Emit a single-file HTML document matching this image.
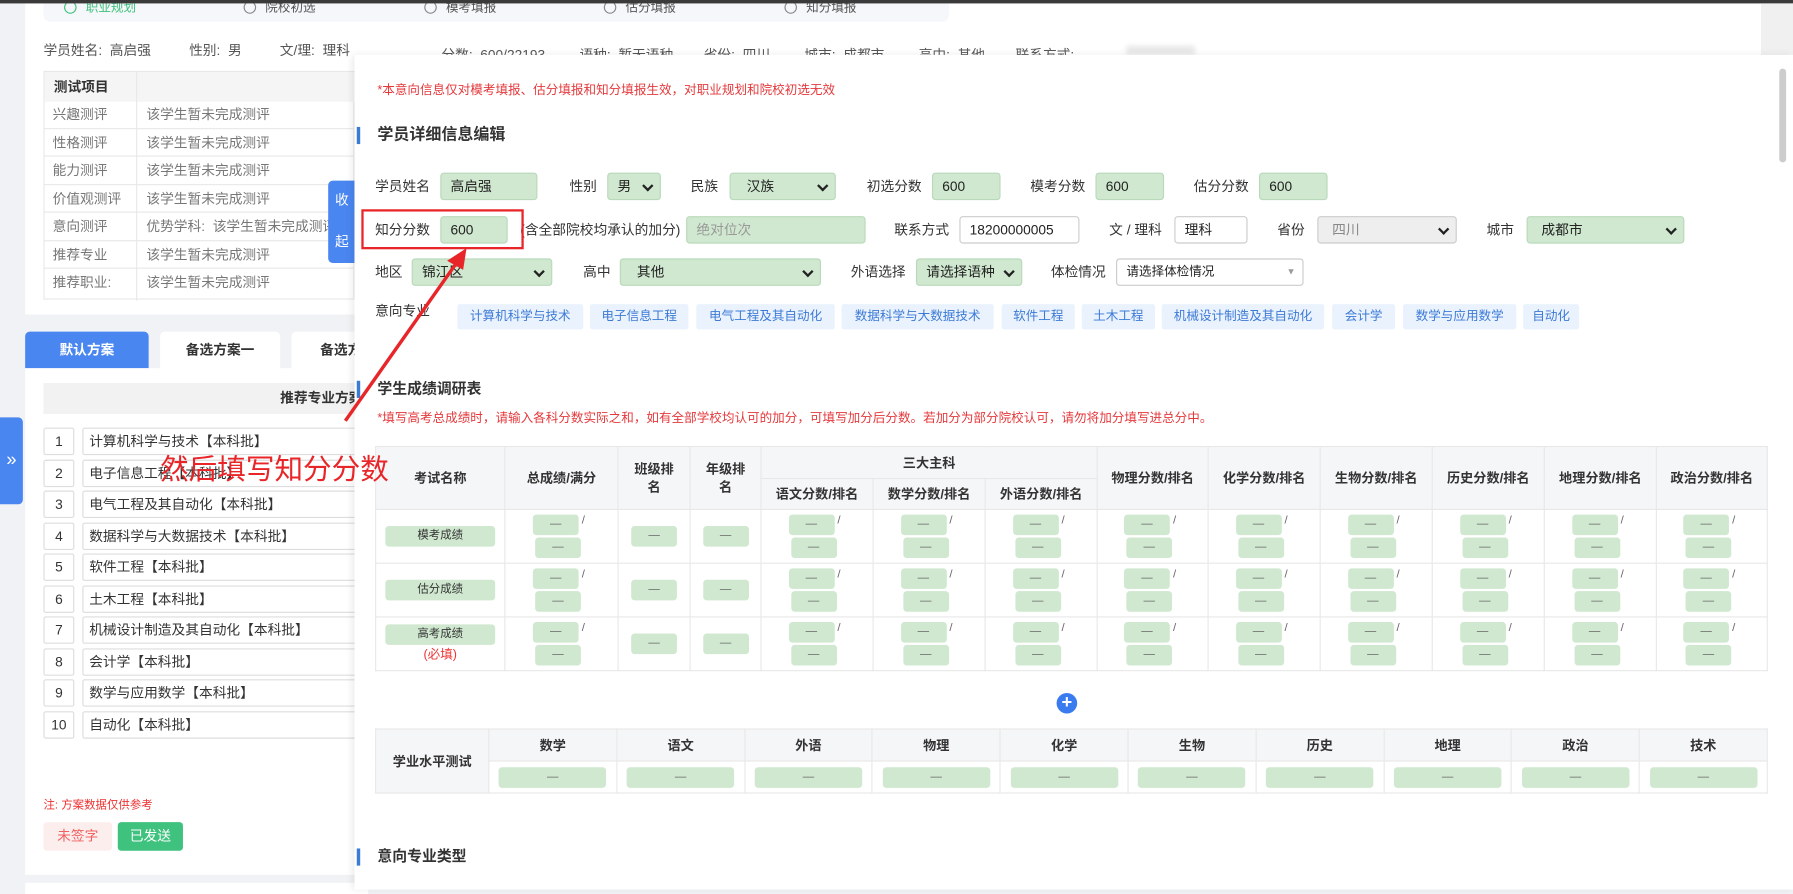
<!DOCTYPE html>
<html><head><meta charset="utf-8">
<style>
*{box-sizing:border-box;margin:0;padding:0}
html,body{width:1793px;height:890px;overflow:hidden;background:#f0f2f5;font-family:"Liberation Sans","Noto Sans CJK SC",sans-serif;color:#333}
#w{position:absolute;left:0;top:0;width:1568px;height:778px;transform:scale(1.14349);transform-origin:0 0;font-size:12px}
.a{position:absolute}
.lbl{position:absolute;font-size:12px;color:#333;line-height:14px}
.in{position:absolute;height:24px;border:1px solid #b9d9bb;background:#cfe8cf;border-radius:3px;font-size:12px;line-height:22px;padding-left:8px;color:#222}
.wh{background:#fff;border-color:#ccc}
.gr{background:#eee;border-color:#ccc;color:#888}
.sel:after{content:"";position:absolute;right:7px;top:7px;width:5px;height:5px;border-right:2px solid #222;border-bottom:2px solid #222;transform:rotate(45deg)}
.tag{position:absolute;top:266px;height:22px;background:#e9f2fd;color:#3d7ad6;font-size:11px;line-height:22px;text-align:center;border-radius:2px}
table{border-collapse:collapse;table-layout:fixed}
td,th{border:1px solid #e8e8e8;text-align:center;font-size:11.5px;color:#333;font-weight:bold}
th{background:#f5f6f8}
.g{display:inline-block;width:40px;height:18px;background:#cfe8cf;border-radius:3px;color:#666;font-size:10px;line-height:18px;text-align:center;font-weight:normal}
.pair{display:inline-block;width:50px;text-align:left;line-height:0}
.pair .g{margin:1px 0}
.sl{color:#666;font-weight:normal;font-size:10px;vertical-align:top;line-height:14px}
.lt td{font-weight:bold}
.row{position:absolute;left:38px;height:22px;width:290px}
.num{position:absolute;left:0;width:27px;height:24px;border:1px solid #ddd;border-radius:2px;text-align:center;line-height:22px;font-size:12px;background:#fff}
.txt{position:absolute;left:34px;width:260px;height:24px;border:1px solid #ddd;border-radius:2px;line-height:22px;padding-left:5px;font-size:12px;background:#fff}
.st{position:absolute;top:-5px;font-size:11px;color:#555;white-space:nowrap}
.st i{display:inline-block;width:11px;height:11px;border:1px solid #888;border-radius:50%;margin-right:8px;vertical-align:-2px}
</style></head><body><div id="w">
<div class="a" style="left:22px;top:3px;width:1520px;height:272px;background:#fff"></div>
<div class="a" style="left:38px;top:3px;width:792px;height:16px;background:#f5f7fa;border-radius:0 0 6px 6px;overflow:hidden">
<div class="st" style="left:18px;color:#3ec27d"><i style="border-color:#3ec27d"></i>职业规划</div>
<div class="st" style="left:175px"><i></i>院校初选</div>
<div class="st" style="left:333px"><i></i>模考填报</div>
<div class="st" style="left:490px"><i></i>估分填报</div>
<div class="st" style="left:648px"><i></i>知分填报</div>
</div>
<div class="a" style="left:0;top:0;width:1568px;height:3px;background:#3a3a3a"></div>
<div class="lbl" style="left:38px;top:37px;color:#555;white-space:nowrap">学员姓名:&nbsp;&nbsp;高启强&nbsp;&nbsp;&nbsp;&nbsp;&nbsp;&nbsp;&nbsp;&nbsp;&nbsp;&nbsp;性别:&nbsp;&nbsp;男&nbsp;&nbsp;&nbsp;&nbsp;&nbsp;&nbsp;&nbsp;&nbsp;&nbsp;&nbsp;文/理:&nbsp;&nbsp;理科</div>
<div class="lbl" style="left:386px;top:41px;color:#555;white-space:nowrap">分数:&nbsp;&nbsp;600/22193&nbsp;&nbsp;&nbsp;&nbsp;&nbsp;&nbsp;&nbsp;&nbsp;&nbsp;语种:&nbsp;&nbsp;暂无语种&nbsp;&nbsp;&nbsp;&nbsp;&nbsp;&nbsp;&nbsp;&nbsp;省份:&nbsp;&nbsp;四川&nbsp;&nbsp;&nbsp;&nbsp;&nbsp;&nbsp;&nbsp;&nbsp;&nbsp;城市:&nbsp;&nbsp;成都市&nbsp;&nbsp;&nbsp;&nbsp;&nbsp;&nbsp;&nbsp;&nbsp;&nbsp;高中:&nbsp;&nbsp;其他&nbsp;&nbsp;&nbsp;&nbsp;&nbsp;&nbsp;&nbsp;&nbsp;联系方式:</div>
<div class="a" style="left:985px;top:40px;width:60px;height:8px;background:#e8e8e8;filter:blur(2px)"></div>
<div class="a" style="left:38px;top:62px;width:272px;height:200px;border:1px solid #e8e8e8">
<div class="a" style="left:0;top:0;width:272px;height:26px;background:#f5f5f5"></div>
<div class="a" style="left:80px;top:0;width:1px;height:200px;background:#e8e8e8"></div>
<div class="lbl" style="left:8px;top:6px;font-weight:bold">测试项目</div>
</div>
<div class="a" style="left:38px;top:88px;width:272px;font-size:12px;color:#777">
<div style="height:24.5px;border-bottom:1px solid #e8e8e8;line-height:24px;padding-left:8px;position:relative">兴趣测评<span style="position:absolute;left:90px">该学生暂未完成测评</span></div>
<div style="height:24.5px;border-bottom:1px solid #e8e8e8;line-height:24px;padding-left:8px;position:relative">性格测评<span style="position:absolute;left:90px">该学生暂未完成测评</span></div>
<div style="height:24.5px;border-bottom:1px solid #e8e8e8;line-height:24px;padding-left:8px;position:relative">能力测评<span style="position:absolute;left:90px">该学生暂未完成测评</span></div>
<div style="height:24.5px;border-bottom:1px solid #e8e8e8;line-height:24px;padding-left:8px;position:relative">价值观测评<span style="position:absolute;left:90px">该学生暂未完成测评</span></div>
<div style="height:24.5px;border-bottom:1px solid #e8e8e8;line-height:24px;padding-left:8px;position:relative">意向测评<span style="position:absolute;left:90px;white-space:nowrap">优势学科:&nbsp;&nbsp;该学生暂未完成测评</span></div>
<div style="height:24.5px;border-bottom:1px solid #e8e8e8;line-height:24px;padding-left:8px;position:relative">推荐专业<span style="position:absolute;left:90px">该学生暂未完成测评</span></div>
<div style="height:24.5px;line-height:24px;padding-left:8px;position:relative">推荐职业:<span style="position:absolute;left:90px">该学生暂未完成测评</span></div>
</div>
<div class="a" style="left:287px;top:158px;width:24px;height:72px;background:#4a86f0;border-radius:4px 0 0 4px;color:#fff;font-size:12px;text-align:center;line-height:18px;padding-top:8px">收<br><br>起</div>
<div class="a" style="left:22px;top:290px;width:108px;height:32px;background:#4a86f0;border-radius:4px 4px 0 0;color:#fff;font-weight:bold;text-align:center;line-height:32px">默认方案</div>
<div class="a" style="left:140px;top:290px;width:105px;height:32px;background:#fff;border-radius:4px 4px 0 0;font-weight:bold;text-align:center;line-height:32px">备选方案一</div>
<div class="a" style="left:255px;top:290px;width:60px;height:32px;background:#fff;border-radius:4px 0 0 0;font-weight:bold;line-height:32px;padding-left:25px;overflow:hidden;white-space:nowrap">备选方案二</div>
<div class="a" style="left:22px;top:322px;width:300px;height:443px;background:#fff"></div>
<div class="a" style="left:38px;top:335px;width:280px;height:27px;background:#f2f2f2;font-weight:bold;line-height:27px;padding-left:207px;white-space:nowrap;overflow:hidden">推荐专业方案</div>
<div class="a" style="left:0;top:365px;width:20px;height:76px;background:#4a86f0;border-radius:0 4px 4px 0;color:#fff;font-size:16px;text-align:center;line-height:76px">»</div>
<div class="row" style="top:374px"><div class="num">1</div><div class="txt">计算机科学与技术【本科批】</div></div>
<div class="row" style="top:401.5px"><div class="num">2</div><div class="txt">电子信息工程【本科批】</div></div>
<div class="row" style="top:429px"><div class="num">3</div><div class="txt">电气工程及其自动化【本科批】</div></div>
<div class="row" style="top:456.5px"><div class="num">4</div><div class="txt">数据科学与大数据技术【本科批】</div></div>
<div class="row" style="top:484px"><div class="num">5</div><div class="txt">软件工程【本科批】</div></div>
<div class="row" style="top:511.5px"><div class="num">6</div><div class="txt">土木工程【本科批】</div></div>
<div class="row" style="top:539px"><div class="num">7</div><div class="txt">机械设计制造及其自动化【本科批】</div></div>
<div class="row" style="top:566.5px"><div class="num">8</div><div class="txt">会计学【本科批】</div></div>
<div class="row" style="top:594px"><div class="num">9</div><div class="txt">数学与应用数学【本科批】</div></div>
<div class="row" style="top:621.5px"><div class="num">10</div><div class="txt">自动化【本科批】</div></div>
<div class="lbl" style="left:38px;top:698px;font-size:10px;color:#e33">注:&nbsp;方案数据仅供参考</div>
<div class="a" style="left:38px;top:719px;width:60px;height:25px;background:#fdeeee;color:#f06060;text-align:center;line-height:25px;border-radius:3px">未签字</div>
<div class="a" style="left:103px;top:719px;width:57px;height:25px;background:#3ec27d;color:#fff;text-align:center;line-height:25px;border-radius:3px">已发送</div>
<div class="a" style="left:22px;top:772px;width:300px;height:10px;background:#fff"></div>
<div class="a" style="left:1540px;top:3px;width:28px;height:55px;background:#f0f0f0"></div>
<!-- modal -->
<div class="a" style="left:310px;top:48px;width:1258px;height:730px;background:#fff;box-shadow:-2px 0 6px rgba(0,0,0,.08)"></div>
<div class="a" style="left:1556px;top:60px;width:6px;height:82px;background:#ccc;border-radius:3px"></div>
<div class="lbl" style="left:330px;top:72px;font-size:11px;color:#e4393c">*本意向信息仅对模考填报、估分填报和知分填报生效，对职业规划和院校初选无效</div>
<div class="a" style="left:312px;top:111px;width:3px;height:15px;background:#3a7bd5"></div>
<div class="lbl" style="left:330px;top:110px;font-size:14px;font-weight:bold">学员详细信息编辑</div>
<div class="lbl" style="left:328px;top:156px">学员姓名</div><div class="in" style="left:385px;top:151px;width:85px">高启强</div>
<div class="lbl" style="left:498px;top:156px">性别</div><div class="in sel" style="left:531px;top:151px;width:47px">男</div>
<div class="lbl" style="left:604px;top:156px">民族</div><div class="in sel" style="left:638px;top:151px;width:93px;padding-left:14px">汉族</div>
<div class="lbl" style="left:758px;top:156px">初选分数</div><div class="in" style="left:815px;top:151px;width:60px">600</div>
<div class="lbl" style="left:901px;top:156px">模考分数</div><div class="in" style="left:958px;top:151px;width:60px">600</div>
<div class="lbl" style="left:1044px;top:156px">估分分数</div><div class="in" style="left:1101px;top:151px;width:60px">600</div>
<div class="lbl" style="left:328px;top:194px">知分分数</div><div class="in" style="left:385px;top:189px;width:59px">600</div>
<div class="lbl" style="left:455px;top:194px">(含全部院校均承认的加分)</div><div class="in" style="left:600px;top:189px;width:157px;color:#999">绝对位次</div>
<div class="lbl" style="left:782px;top:194px">联系方式</div><div class="in wh" style="left:839px;top:189px;width:105px">18200000005</div>
<div class="lbl" style="left:970px;top:194px">文 / 理科</div><div class="in wh" style="left:1027px;top:189px;width:64px">理科</div>
<div class="lbl" style="left:1117px;top:194px">省份</div><div class="in gr sel" style="left:1152px;top:189px;width:122px;padding-left:12px">四川</div>
<div class="lbl" style="left:1300px;top:194px">城市</div><div class="in sel" style="left:1335px;top:189px;width:138px;padding-left:12px">成都市</div>
<div class="lbl" style="left:328px;top:231px">地区</div><div class="in sel" style="left:360px;top:226px;width:123px">锦江区</div>
<div class="lbl" style="left:510px;top:231px">高中</div><div class="in sel" style="left:542px;top:226px;width:176px;padding-left:14px">其他</div>
<div class="lbl" style="left:744px;top:231px">外语选择</div><div class="in sel" style="left:801px;top:226px;width:93px">请选择语种</div>
<div class="lbl" style="left:919px;top:231px">体检情况</div><div class="in wh" style="left:976px;top:226px;width:164px;font-size:11px">请选择体检情况<span style="position:absolute;right:6px;color:#999;font-size:8px">▼</span></div>
<div class="lbl" style="left:328px;top:265px">意向专业</div>
<div class="tag" style="left:400px;width:110px">计算机科学与技术</div>
<div class="tag" style="left:516px;width:86px">电子信息工程</div>
<div class="tag" style="left:609px;width:121px">电气工程及其自动化</div>
<div class="tag" style="left:736px;width:133px">数据科学与大数据技术</div>
<div class="tag" style="left:876px;width:64px">软件工程</div>
<div class="tag" style="left:946px;width:64px">土木工程</div>
<div class="tag" style="left:1016px;width:142px">机械设计制造及其自动化</div>
<div class="tag" style="left:1165px;width:55px">会计学</div>
<div class="tag" style="left:1227px;width:99px">数学与应用数学</div>
<div class="tag" style="left:1332px;width:49px">自动化</div>
<div class="a" style="left:312px;top:333px;width:3px;height:15px;background:#3a7bd5"></div>
<div class="lbl" style="left:330px;top:333px;font-size:13px;font-weight:bold">学生成绩调研表</div>
<div class="lbl" style="left:330px;top:359px;font-size:11px;color:#e4393c">*填写高考总成绩时，请输入各科分数实际之和，如有全部学校均认可的加分，可填写加分后分数。若加分为部分院校认可，请勿将加分填写进总分中。</div>
<table class="a" style="left:328px;top:390px;width:1217px">
<colgroup><col style="width:113px"><col style="width:99px"><col style="width:63px"><col style="width:62px"><col style="width:98px"><col style="width:98px"><col style="width:98px"><col style="width:97px"><col style="width:98px"><col style="width:98px"><col style="width:98px"><col style="width:98px"><col style="width:97px"></colgroup>
<tr style="height:28px"><th rowspan="2">考试名称</th><th rowspan="2">总成绩/满分</th><th rowspan="2">班级排<br>名</th><th rowspan="2">年级排<br>名</th><th colspan="3">三大主科</th><th rowspan="2">物理分数/排名</th><th rowspan="2">化学分数/排名</th><th rowspan="2">生物分数/排名</th><th rowspan="2">历史分数/排名</th><th rowspan="2">地理分数/排名</th><th rowspan="2">政治分数/排名</th></tr>
<tr style="height:27px"><th>语文分数/排名</th><th>数学分数/排名</th><th>外语分数/排名</th></tr>
<tr style="height:47px"><td><span class="g" style="width:96px;font-size:10px;color:#333">模考成绩</span></td><td><span class="pair"><span class="g">—</span><span class="sl"> /</span><br><span class="g" style="margin-left:2px">—</span></span></td><td><span class="g">—</span></td><td><span class="g">—</span></td><td><span class="pair"><span class="g">—</span><span class="sl"> /</span><br><span class="g" style="margin-left:2px">—</span></span></td><td><span class="pair"><span class="g">—</span><span class="sl"> /</span><br><span class="g" style="margin-left:2px">—</span></span></td><td><span class="pair"><span class="g">—</span><span class="sl"> /</span><br><span class="g" style="margin-left:2px">—</span></span></td><td><span class="pair"><span class="g">—</span><span class="sl"> /</span><br><span class="g" style="margin-left:2px">—</span></span></td><td><span class="pair"><span class="g">—</span><span class="sl"> /</span><br><span class="g" style="margin-left:2px">—</span></span></td><td><span class="pair"><span class="g">—</span><span class="sl"> /</span><br><span class="g" style="margin-left:2px">—</span></span></td><td><span class="pair"><span class="g">—</span><span class="sl"> /</span><br><span class="g" style="margin-left:2px">—</span></span></td><td><span class="pair"><span class="g">—</span><span class="sl"> /</span><br><span class="g" style="margin-left:2px">—</span></span></td><td><span class="pair"><span class="g">—</span><span class="sl"> /</span><br><span class="g" style="margin-left:2px">—</span></span></td></tr>
<tr style="height:47px"><td><span class="g" style="width:96px;font-size:10px;color:#333">估分成绩</span></td><td><span class="pair"><span class="g">—</span><span class="sl"> /</span><br><span class="g" style="margin-left:2px">—</span></span></td><td><span class="g">—</span></td><td><span class="g">—</span></td><td><span class="pair"><span class="g">—</span><span class="sl"> /</span><br><span class="g" style="margin-left:2px">—</span></span></td><td><span class="pair"><span class="g">—</span><span class="sl"> /</span><br><span class="g" style="margin-left:2px">—</span></span></td><td><span class="pair"><span class="g">—</span><span class="sl"> /</span><br><span class="g" style="margin-left:2px">—</span></span></td><td><span class="pair"><span class="g">—</span><span class="sl"> /</span><br><span class="g" style="margin-left:2px">—</span></span></td><td><span class="pair"><span class="g">—</span><span class="sl"> /</span><br><span class="g" style="margin-left:2px">—</span></span></td><td><span class="pair"><span class="g">—</span><span class="sl"> /</span><br><span class="g" style="margin-left:2px">—</span></span></td><td><span class="pair"><span class="g">—</span><span class="sl"> /</span><br><span class="g" style="margin-left:2px">—</span></span></td><td><span class="pair"><span class="g">—</span><span class="sl"> /</span><br><span class="g" style="margin-left:2px">—</span></span></td><td><span class="pair"><span class="g">—</span><span class="sl"> /</span><br><span class="g" style="margin-left:2px">—</span></span></td></tr>
<tr style="height:47px"><td><span class="g" style="width:96px;font-size:10px;color:#333">高考成绩</span><br><span style="color:#e33;font-weight:normal;font-size:11px">(必填)</span></td><td><span class="pair"><span class="g">—</span><span class="sl"> /</span><br><span class="g" style="margin-left:2px">—</span></span></td><td><span class="g">—</span></td><td><span class="g">—</span></td><td><span class="pair"><span class="g">—</span><span class="sl"> /</span><br><span class="g" style="margin-left:2px">—</span></span></td><td><span class="pair"><span class="g">—</span><span class="sl"> /</span><br><span class="g" style="margin-left:2px">—</span></span></td><td><span class="pair"><span class="g">—</span><span class="sl"> /</span><br><span class="g" style="margin-left:2px">—</span></span></td><td><span class="pair"><span class="g">—</span><span class="sl"> /</span><br><span class="g" style="margin-left:2px">—</span></span></td><td><span class="pair"><span class="g">—</span><span class="sl"> /</span><br><span class="g" style="margin-left:2px">—</span></span></td><td><span class="pair"><span class="g">—</span><span class="sl"> /</span><br><span class="g" style="margin-left:2px">—</span></span></td><td><span class="pair"><span class="g">—</span><span class="sl"> /</span><br><span class="g" style="margin-left:2px">—</span></span></td><td><span class="pair"><span class="g">—</span><span class="sl"> /</span><br><span class="g" style="margin-left:2px">—</span></span></td><td><span class="pair"><span class="g">—</span><span class="sl"> /</span><br><span class="g" style="margin-left:2px">—</span></span></td></tr>
</table>
<div class="a" style="left:924px;top:606px;width:18px;height:18px;border-radius:50%;background:#3a7bf0;color:#fff;text-align:center;line-height:18px;font-size:16px;font-weight:bold">+</div>
<table class="a lt" style="left:328px;top:637px;width:1217px">
<colgroup><col style="width:99px"><col span="10" style="width:111.8px"></colgroup>
<tr style="height:28px"><th rowspan="2">学业水平测试</th><th>数学</th><th>语文</th><th>外语</th><th>物理</th><th>化学</th><th>生物</th><th>历史</th><th>地理</th><th>政治</th><th>技术</th></tr>
<tr style="height:28px"><td><span class="g" style="width:94px">—</span></td><td><span class="g" style="width:94px">—</span></td><td><span class="g" style="width:94px">—</span></td><td><span class="g" style="width:94px">—</span></td><td><span class="g" style="width:94px">—</span></td><td><span class="g" style="width:94px">—</span></td><td><span class="g" style="width:94px">—</span></td><td><span class="g" style="width:94px">—</span></td><td><span class="g" style="width:94px">—</span></td><td><span class="g" style="width:94px">—</span></td></tr>
</table>
<div class="a" style="left:312px;top:742px;width:3px;height:15px;background:#3a7bd5"></div>
<div class="lbl" style="left:330px;top:742px;font-size:13px;font-weight:bold">意向专业类型</div>
<div class="a" style="left:316px;top:183px;width:142px;height:35px;border:2px solid #e8262a"></div>
<svg class="a" style="left:0;top:0" width="1568" height="778"><line x1="302" y1="368" x2="402" y2="226" stroke="#e8262a" stroke-width="3"/><polygon points="408,217 391,228 405,236" fill="#e8262a"/></svg>
<div class="a" style="left:140px;top:394px;font-size:25px;color:#e8262a;white-space:nowrap;line-height:34px">然后填写知分分数</div>
</div></body></html>
